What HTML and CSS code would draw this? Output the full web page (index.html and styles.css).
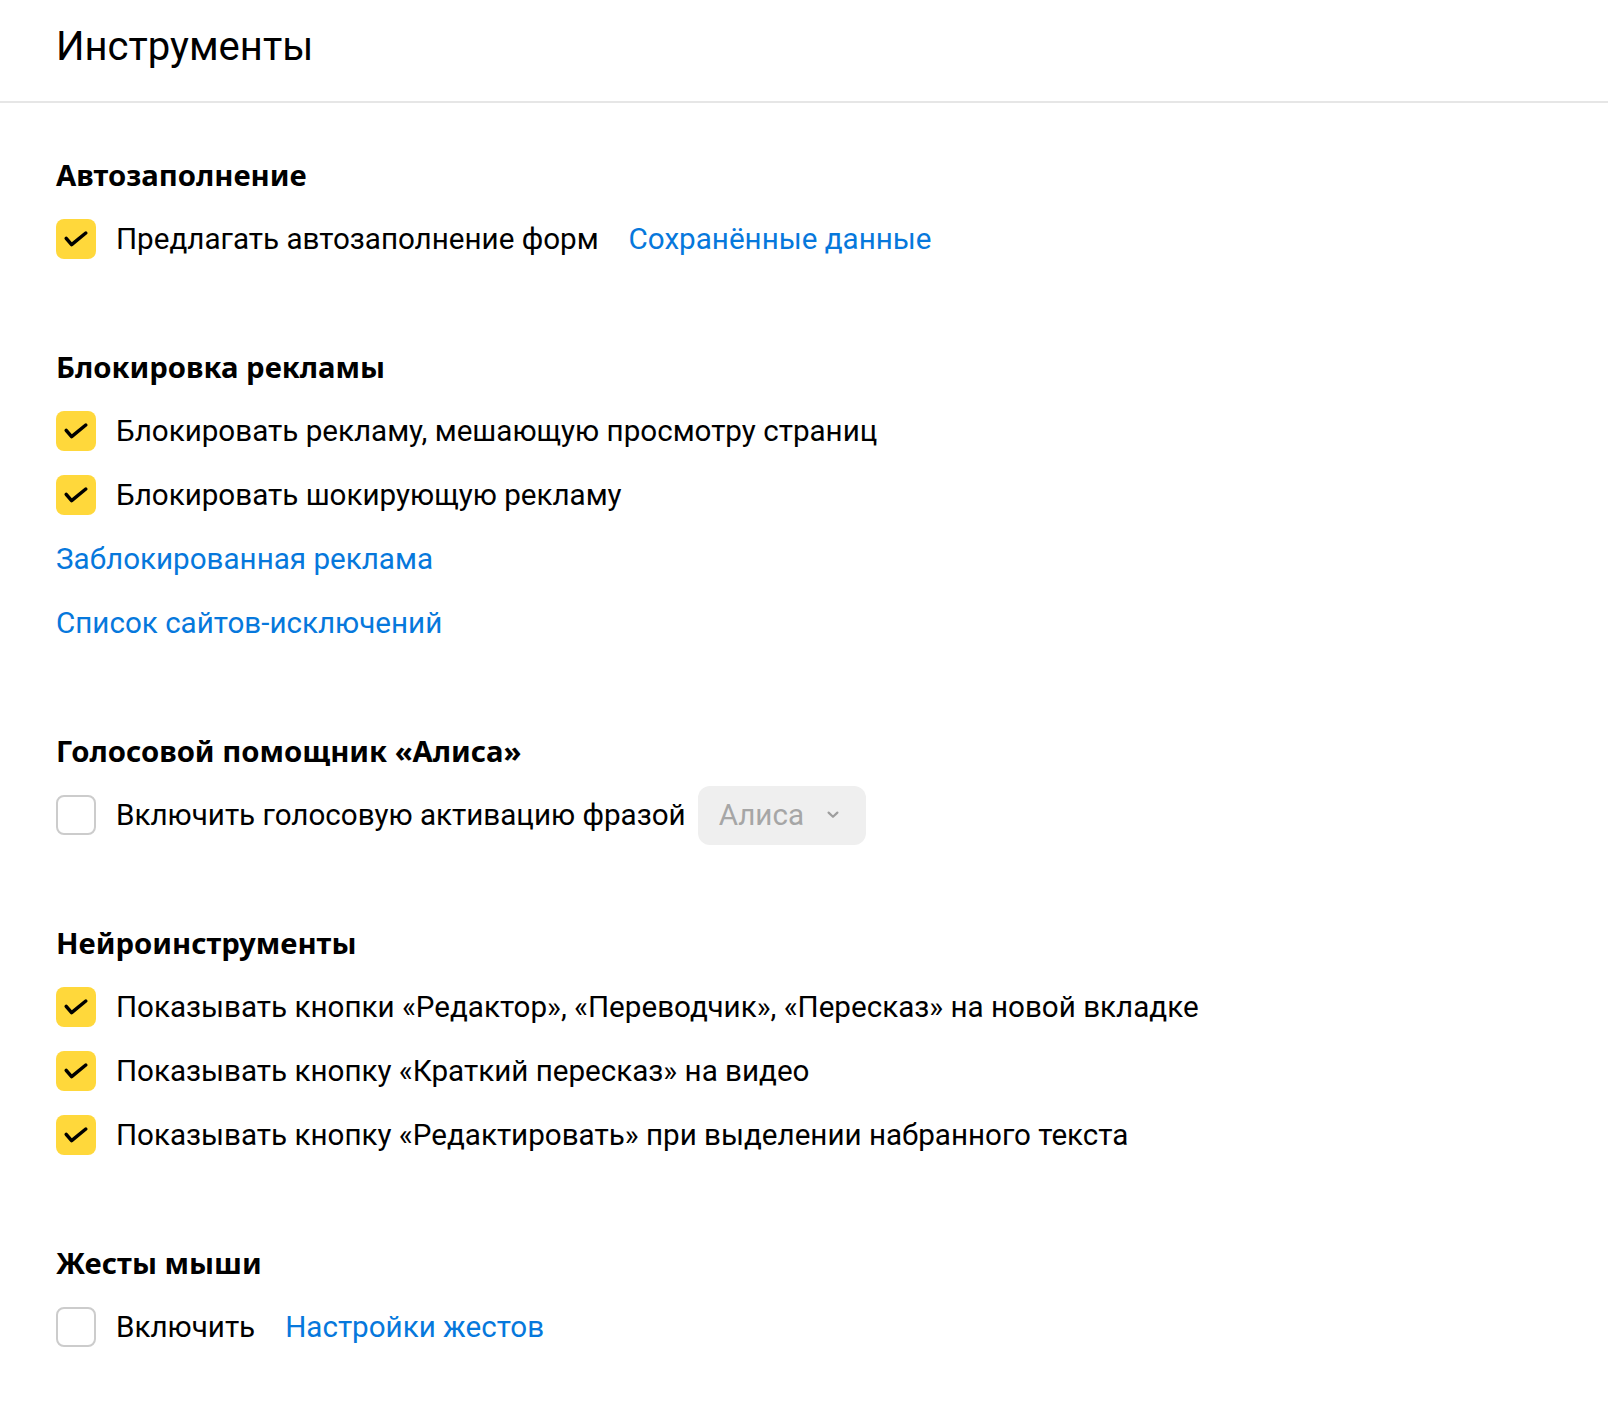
FILE: index.html
```html
<!DOCTYPE html>
<html lang="ru">
<head>
<meta charset="utf-8">
<title>Инструменты</title>
<link rel="stylesheet" href="styles.css">
</head>
<body>
<header class="page-header">
  <h1 class="page-title">Инструменты</h1>
</header>
<main class="content">
  <section class="section">
    <h2 class="section-title">Автозаполнение</h2>
    <div class="row">
      <span class="checkbox checkbox-on"><svg viewBox="0 0 40 40" width="40" height="40"><path d="M10.2 19.4 L15.6 25.6 L29.8 14" fill="none" stroke="#000" stroke-width="3.5" stroke-linecap="round" stroke-linejoin="round"/></svg></span>
      <span class="label">Предлагать автозаполнение форм</span>
      <a class="link link-inline" href="#">Сохранённые данные</a>
    </div>
  </section>

  <section class="section">
    <h2 class="section-title">Блокировка рекламы</h2>
    <div class="row">
      <span class="checkbox checkbox-on"><svg viewBox="0 0 40 40" width="40" height="40"><path d="M10.2 19.4 L15.6 25.6 L29.8 14" fill="none" stroke="#000" stroke-width="3.5" stroke-linecap="round" stroke-linejoin="round"/></svg></span>
      <span class="label">Блокировать рекламу, мешающую просмотру страниц</span>
    </div>
    <div class="row">
      <span class="checkbox checkbox-on"><svg viewBox="0 0 40 40" width="40" height="40"><path d="M10.2 19.4 L15.6 25.6 L29.8 14" fill="none" stroke="#000" stroke-width="3.5" stroke-linecap="round" stroke-linejoin="round"/></svg></span>
      <span class="label">Блокировать шокирующую рекламу</span>
    </div>
    <div class="row"><a class="link" href="#">Заблокированная реклама</a></div>
    <div class="row"><a class="link" href="#">Список сайтов-исключений</a></div>
  </section>

  <section class="section">
    <h2 class="section-title">Голосовой помощник «Алиса»</h2>
    <div class="row">
      <span class="checkbox checkbox-off"></span>
      <span class="label">Включить голосовую активацию фразой</span>
      <span class="select">
        <span class="select-text">Алиса</span>
        <svg class="select-arrow" viewBox="0 0 12 8" width="12" height="8"><path d="M1.6 1.6 L6 5.8 L10.4 1.6" fill="none" stroke="#9e9e9e" stroke-width="2.2" stroke-linecap="round" stroke-linejoin="round"/></svg>
      </span>
    </div>
  </section>

  <section class="section">
    <h2 class="section-title">Нейроинструменты</h2>
    <div class="row">
      <span class="checkbox checkbox-on"><svg viewBox="0 0 40 40" width="40" height="40"><path d="M10.2 19.4 L15.6 25.6 L29.8 14" fill="none" stroke="#000" stroke-width="3.5" stroke-linecap="round" stroke-linejoin="round"/></svg></span>
      <span class="label">Показывать кнопки «Редактор», «Переводчик», «Пересказ» на новой вкладке</span>
    </div>
    <div class="row">
      <span class="checkbox checkbox-on"><svg viewBox="0 0 40 40" width="40" height="40"><path d="M10.2 19.4 L15.6 25.6 L29.8 14" fill="none" stroke="#000" stroke-width="3.5" stroke-linecap="round" stroke-linejoin="round"/></svg></span>
      <span class="label">Показывать кнопку «Краткий пересказ» на видео</span>
    </div>
    <div class="row">
      <span class="checkbox checkbox-on"><svg viewBox="0 0 40 40" width="40" height="40"><path d="M10.2 19.4 L15.6 25.6 L29.8 14" fill="none" stroke="#000" stroke-width="3.5" stroke-linecap="round" stroke-linejoin="round"/></svg></span>
      <span class="label">Показывать кнопку «Редактировать» при выделении набранного текста</span>
    </div>
  </section>

  <section class="section">
    <h2 class="section-title">Жесты мыши</h2>
    <div class="row">
      <span class="checkbox checkbox-off"></span>
      <span class="label">Включить</span>
      <a class="link link-inline" href="#">Настройки жестов</a>
    </div>
  </section>
</main>
</body>
</html>
```
FILE: styles.css
```css
html, body {
  margin: 0;
  padding: 0;
  background: #ffffff;
}

body {
  font-family: Roboto, "Noto Sans", sans-serif;
  color: #000000;
}

.page-header {
  height: 103px;
  box-sizing: border-box;
  padding: 19px 56px 0;
  border-bottom: 2px solid #e6e6e6;
}

.page-title {
  margin: 0;
  font-size: 40px;
  font-weight: 400;
  line-height: 56px;
  letter-spacing: 0;
}

.content {
  padding: 40px 56px 0;
}

.section {
  margin-bottom: 64px;
}

.section-title {
  margin: 0;
  height: 64px;
  display: flex;
  align-items: center;
  font-family: "Noto Sans", Roboto, sans-serif;
  font-size: 29.3px;
  font-weight: 700;
  line-height: 40px;
}

.row {
  height: 64px;
  display: flex;
  align-items: center;
  font-size: 29.6px;
  line-height: 40px;
}

.checkbox {
  flex: none;
  width: 40px;
  height: 40px;
  box-sizing: border-box;
  border-radius: 8px;
  margin-right: 20px;
  display: flex;
}

.checkbox-on {
  background: #ffd83b;
}

.checkbox-off {
  border: 2px solid #cccccc;
  background: #ffffff;
}

.label {
  white-space: nowrap;
}

.link {
  color: #0678dc;
  text-decoration: none;
  white-space: nowrap;
}

.link-inline {
  margin-left: 30px;
}

.select {
  margin-left: 12px;
  width: 168px;
  height: 59px;
  box-sizing: border-box;
  border-radius: 12px;
  background: #efefef;
  display: flex;
  align-items: center;
  padding-left: 21px;
  padding-right: 27px;
  justify-content: space-between;
}

.select-text {
  color: #a6a6a6;
}

.select-arrow {
  display: block;
}
```
